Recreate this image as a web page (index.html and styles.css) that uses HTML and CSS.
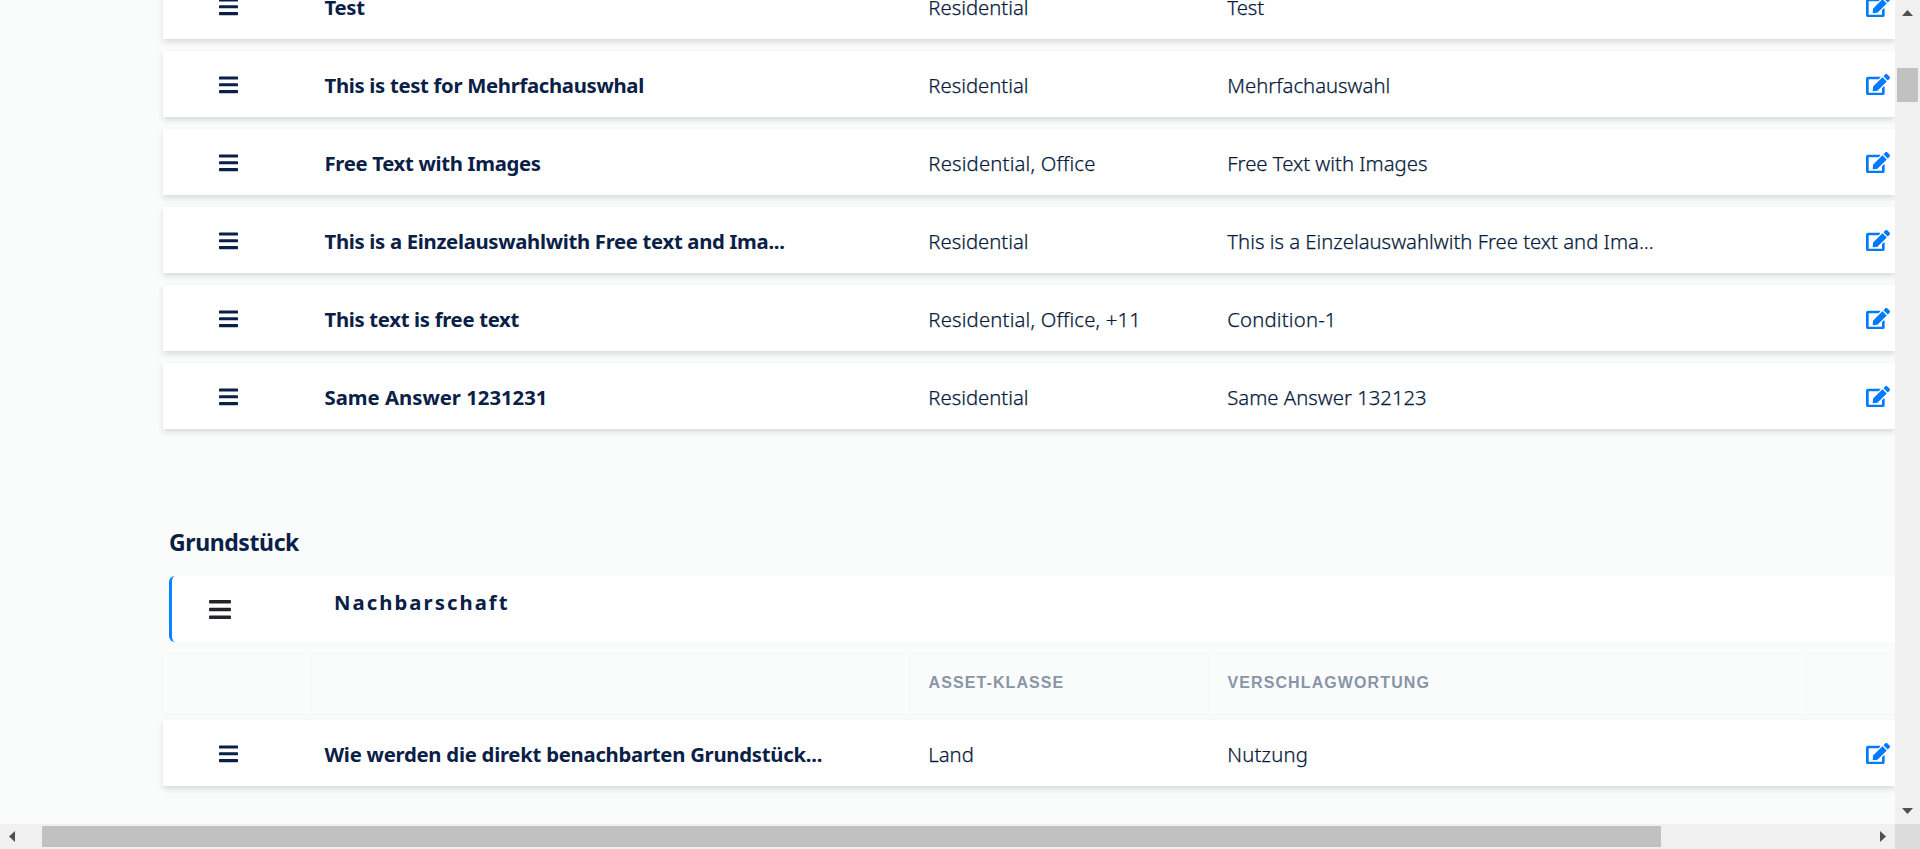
FILE: index.html
```html
<!DOCTYPE html>
<html lang="de">
<head>
<meta charset="utf-8">
<title>Fragen</title>
<link rel="stylesheet" href="styles.css">
</head>
<body>
<svg class="defs" aria-hidden="true">
  <symbol id="bars" viewBox="0 0 448 512"><path d="M16 132h416c8.800 0 16-7.200 16-16V76c0-8.800-7.200-16-16-16H16C7.200 60 0 67.200 0 76v40c0 8.800 7.200 16 16 16zm0 160h416c8.800 0 16-7.200 16-16v-40c0-8.800-7.200-16-16-16H16c-8.800 0-16 7.200-16 16v40c0 8.800 7.200 16 16 16zm0 160h416c8.800 0 16-7.200 16-16v-40c0-8.800-7.200-16-16-16H16c-8.800 0-16 7.200-16 16v40c0 8.800 7.200 16 16 16z"/></symbol>
  <symbol id="edit" viewBox="0 0 576 512"><path d="M402.600 83.200l90.200 90.200c3.800 3.800 3.800 10 0 13.800L274.400 405.600l-92.800 10.300c-12.400 1.400-22.900-9.100-21.500-21.500l10.300-92.800L388.800 83.200c3.800-3.800 10-3.800 13.800 0zm162-22.900l-48.800-48.800c-15.200-15.200-39.900-15.200-55.200 0l-35.400 35.400c-3.800 3.800-3.800 10 0 13.800l90.200 90.200c3.800 3.800 10 3.800 13.800 0l35.400-35.400c15.200-15.300 15.200-40 0-55.200zM384 346.200V448H64V128h229.800c3.200 0 6.200-1.300 8.500-3.500l40-40c7.600-7.600 2.200-20.500-8.500-20.500H48C21.500 64 0 85.500 0 112v352c0 26.500 21.500 48 48 48h352c26.500 0 48-21.500 48-48V306.200c0-10.700-12.900-16-20.500-8.500l-40 40c-2.200 2.300-3.500 5.300-3.500 8.500z"/></symbol>
</svg>
<div class="window">
  <main class="content">
    <div class="rows">
      <div class="row"><svg class="handle"><use href="#bars"/></svg><b class="name">Test</b><span class="cell">Residential</span><span class="cell">Test</span><svg class="edit"><use href="#edit"/></svg></div>
      <div class="row"><svg class="handle"><use href="#bars"/></svg><b class="name">This is test for Mehrfachauswhal</b><span class="cell">Residential</span><span class="cell">Mehrfachauswahl</span><svg class="edit"><use href="#edit"/></svg></div>
      <div class="row"><svg class="handle"><use href="#bars"/></svg><b class="name">Free Text with Images</b><span class="cell wide">Residential, Office</span><span class="cell">Free Text with Images</span><svg class="edit"><use href="#edit"/></svg></div>
      <div class="row"><svg class="handle"><use href="#bars"/></svg><b class="name">This is a Einzelauswahlwith Free text and Ima...</b><span class="cell">Residential</span><span class="cell">This is a Einzelauswahlwith Free text and Ima...</span><svg class="edit"><use href="#edit"/></svg></div>
      <div class="row"><svg class="handle"><use href="#bars"/></svg><b class="name">This text is free text</b><span class="cell wide">Residential, Office, +11</span><span class="cell wide">Condition-1</span><svg class="edit"><use href="#edit"/></svg></div>
      <div class="row"><svg class="handle"><use href="#bars"/></svg><b class="name wide">Same Answer 1231231</b><span class="cell">Residential</span><span class="cell">Same Answer 132123</span><svg class="edit"><use href="#edit"/></svg></div>
    </div>
    <h2 class="section-title">Grundstück</h2>
    <div class="group"><svg class="group-handle"><use href="#bars"/></svg><b class="group-name">Nachbarschaft</b></div>
    <div class="head"><span></span><span></span><span>ASSET-KLASSE</span><span>VERSCHLAGWORTUNG</span><span></span></div>
    <div class="row"><svg class="handle"><use href="#bars"/></svg><b class="name long">Wie werden die direkt benachbarten Grundstück...</b><span class="cell">Land</span><span class="cell wide">Nutzung</span><svg class="edit"><use href="#edit"/></svg></div>
  </main>
  <div class="vbar">
    <svg class="arrow" viewBox="0 0 25 25"><path d="M7 16h11l-5.500-6z"/></svg>
    <div class="vthumb"></div>
    <svg class="arrow" viewBox="0 0 25 25"><path d="M7 9h11l-5.500 6z"/></svg>
  </div>
  <div class="hbar">
    <svg class="arrow" viewBox="0 0 25 25"><path d="M15 7v11l-6-5.500z"/></svg>
    <div class="hthumb"></div>
    <svg class="arrow" viewBox="0 0 25 25"><path d="M10 7v11l6-5.500z"/></svg>
  </div>
  <div class="corner"></div>
</div>
</body>
</html>
```
FILE: styles.css
```css
* { box-sizing: border-box; }
body { margin: 0; overflow: hidden; font-family: "Noto Sans", sans-serif; font-size: 20.3px; color: #0a2047; }
svg { display: block; fill: currentColor; }
.defs { display: none; }
.window { display: grid; grid-template: 824px 25px / 1895px 25px; height: 849px; }
.content { background: #fafcfb; overflow: hidden; padding-left: 163px; min-width: 0; }
.rows { display: flex; flex-direction: column; gap: 12px; margin-top: -27px; }
.row { display: grid; grid-template-columns: 149px 598px 299px 635px 1fr; align-items: center; height: 66px; background: #fff; box-shadow: 0 3px 6px rgba(10, 10, 60, .14); white-space: nowrap; }
.name { font-weight: 700; padding: 1px 0 0 12.5px; letter-spacing: -.31px; }
.cell { font-weight: 300; padding: 1px 0 0 18.300px; color: #061a3c; -webkit-text-stroke: .25px #061a3c; }
.name.wide { letter-spacing: 0; }
.name.long { letter-spacing: -.25px; }
.cell.wide { letter-spacing: .18px; }
.handle { width: 19px; height: 21.700px; margin: 1px 0 0 56px; }
.edit { width: 24px; height: 21.300px; margin: 1px 0 0 22px; color: #007bff; }
.section-title { margin: 97px 0 0 6px; font-size: 23px; font-weight: 700; line-height: 32px; letter-spacing: -.4px; }
.group { display: flex; height: 66px; margin: 18px 0 0 6px; background: #fff; border-left: 3px solid #0a84ff; border-radius: 6px 0 0 6px; }
.group-handle { width: 22px; height: 25px; margin: 21px 0 0 37px; color: #212529; }
.group-name { margin: 12px 0 0 103px; font-weight: 700; letter-spacing: 2.050px; line-height: 28px; }
.head { display: grid; grid-template-columns: 149px 598px 299px 598px 1fr; height: 62px; margin: 11px 0 5px -1px; border-top: 1px solid #f6f8f8; border-bottom: 1px solid #f6f8f8; font: bold 16px/18px "Liberation Sans", sans-serif; letter-spacing: 1.100px; color: #8a94a8; }
.head span { border-left: 1px solid #f6f8f8; padding: 20px 0 0 18.500px; }
.vbar { display: flex; flex-direction: column; background: #f0f0f0; }
.arrow { width: 25px; height: 25px; flex: none; fill: #505050; }
.vthumb { width: 21px; height: 34px; margin: 43px 2px auto; background: #c1c1c1; }
.hbar { display: flex; background: #f0f0f0; }
.hthumb { width: 1619px; height: 21px; margin: 2px auto 2px 17px; background: #c1c1c1; }
.corner { background: #dcdcdc; }
```
